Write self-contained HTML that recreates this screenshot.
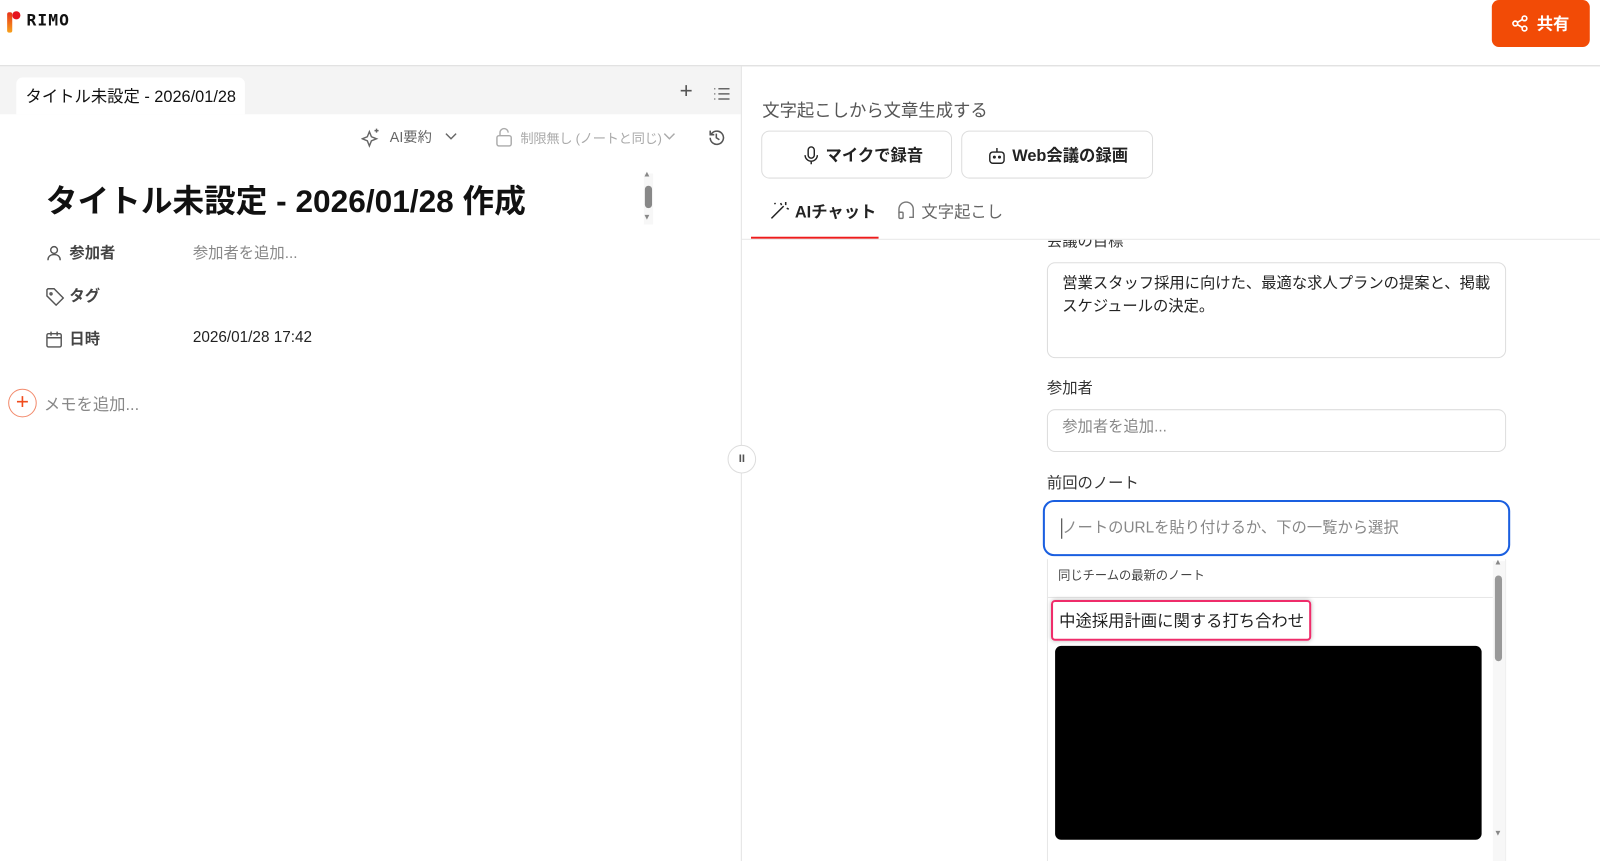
<!DOCTYPE html>
<html><head><meta charset="utf-8"><style>
*{box-sizing:border-box;margin:0;padding:0}
body{width:1600px;height:844px;overflow:hidden;background:#fff;font-family:"Liberation Sans","Noto Sans CJK JP",sans-serif;color:#111;position:relative}
#w{position:absolute;left:0;top:0;width:1568px;height:827px;transform:scale(1.0204);transform-origin:0 0}
.a{position:absolute}
.t{white-space:nowrap;margin-top:-2px}
</style></head><body><div id="w">
<!-- header -->
<div class="a" style="left:7px;top:12px;width:5px;height:20px;background:linear-gradient(#e8321a,#f7a21b);border-radius:2px"></div>
<div class="a" style="left:12px;top:11px;width:8px;height:8px;background:#e5141f;border-radius:50%"></div>
<div class="a t" style="left:26px;top:12px;font-size:16px;font-weight:bold;letter-spacing:1px;font-family:'DejaVu Sans Mono',monospace">RIMO</div>
<div class="a" style="left:1462px;top:0;width:96px;height:46px;background:#f24b06;border-radius:7px;color:#fff;font-weight:bold;font-size:16px">
<svg class="a" style="left:19px;top:14px" width="18" height="18" viewBox="0 0 18 18" fill="none" stroke="#fff" stroke-width="1.6"><circle cx="13" cy="4" r="2.3"/><circle cx="4" cy="9" r="2.3"/><circle cx="13" cy="14" r="2.3"/><path d="M6 8 11 5M6 10 11 13"/></svg>
<span class="a t" style="left:44px;top:12px">共有</span></div>
<div class="a" style="left:0;top:64px;width:1600px;height:1px;background:#d6d6d6"></div>
<!-- left tab bar -->
<div class="a" style="left:0;top:65px;width:726px;height:47px;background:#f4f4f4"></div>
<div class="a" style="left:16px;top:76px;width:224px;height:36px;background:#fff;border-radius:6px 6px 0 0"></div>
<div class="a t" style="left:25px;top:83px;font-size:16px;width:206px;overflow:hidden">タイトル未設定 - 2026/01/28 作成</div>
<div class="a t" style="left:666px;top:78px;font-size:22px;color:#555;font-weight:300">+</div>
<svg class="a" style="left:699px;top:85px" width="16" height="14" stroke="#666" stroke-width="1.4"><path d="M5 2h11M5 7h11M5 12h11M1 2h1M1 7h1M1 12h1"/></svg>
<!-- toolbar -->
<svg class="a" style="left:354px;top:125px" width="20" height="20" fill="none" stroke="#666" stroke-width="1.4"><path d="M8 4l2 5 5 2-5 2-2 5-2-5-5-2 5-2z"/><path d="M15 1v4M13 3h4"/></svg>
<div class="a t" style="left:382px;top:126px;font-size:14px;color:#666">AI要約</div>
<svg class="a" style="left:436px;top:130px" width="12" height="8" fill="none" stroke="#666" stroke-width="1.4"><path d="M1 1l5 5 5-5"/></svg>
<svg class="a" style="left:486px;top:125px" width="16" height="19" fill="none" stroke="#aaa" stroke-width="1.4"><rect x="1" y="8" width="14" height="10" rx="2"/><path d="M4 8V5a4 4 0 0 1 8 0"/></svg>
<div class="a t" style="left:510px;top:127px;font-size:13px;color:#aaa;letter-spacing:-0.3px">制限無し (ノートと同じ)</div>
<svg class="a" style="left:650px;top:130px" width="12" height="8" fill="none" stroke="#aaa" stroke-width="1.4"><path d="M1 1l5 5 5-5"/></svg>
<svg class="a" style="left:693px;top:126px" width="18" height="18" fill="none" stroke="#555" stroke-width="1.5"><path d="M3 9a6.5 6.5 0 1 0 2-4.7L3 6M3 2v4h4M9 5v4l3 2"/></svg>
<!-- title -->
<div class="a t" style="left:45px;top:174px;font-size:31px;font-weight:bold">タイトル未設定 - 2026/01/28 作成</div>
<div class="a" style="left:631px;top:170px;width:9px;height:50px;background:#f7f7f7"></div>
<div class="a" style="left:632px;top:182px;width:7px;height:22px;background:#888;border-radius:4px"></div>
<div class="a t" style="left:630px;top:168px;font-size:8px;color:#888">▲</div>
<div class="a t" style="left:630px;top:210px;font-size:8px;color:#888">▼</div>
<!-- props -->
<svg class="a" style="left:46px;top:240px" width="14" height="16" fill="none" stroke="#555" stroke-width="1.4"><circle cx="7" cy="5" r="3.3"/><path d="M1 15c0-4 3-5.5 6-5.5s6 1.5 6 5.5"/></svg>
<div class="a t" style="left:68px;top:239px;font-size:15px;font-weight:bold;color:#444">参加者</div>
<div class="a t" style="left:189px;top:239px;font-size:15px;color:#888">参加者を追加...</div>
<svg class="a" style="left:45px;top:282px" width="18" height="18" fill="none" stroke="#555" stroke-width="1.4"><path d="M1 2v6l9 9 7-7-9-9H2z"/><circle cx="5" cy="6" r="1"/></svg>
<div class="a t" style="left:68px;top:281px;font-size:15px;font-weight:bold;color:#444">タグ</div>
<svg class="a" style="left:45px;top:324px" width="16" height="17" fill="none" stroke="#555" stroke-width="1.4"><rect x="1" y="3" width="14" height="13" rx="1.5"/><path d="M1 7h14M5 1v4M11 1v4"/></svg>
<div class="a t" style="left:68px;top:323px;font-size:15px;font-weight:bold;color:#444">日時</div>
<div class="a t" style="left:189px;top:324px;font-size:15px;color:#222">2026/01/28 17:42</div>
<div class="a" style="left:8px;top:381px;width:28px;height:28px;border:1.5px solid #f28a6c;border-radius:50%;color:#f04b1c;font-size:22px;line-height:24px;text-align:center">+</div>
<div class="a t" style="left:43px;top:385px;font-size:16px;color:#888">メモを追加...</div>
<!-- divider -->
<div class="a" style="left:726px;top:65px;width:1px;height:779px;background:#e2e2e2"></div>
<div class="a" style="left:713px;top:436px;width:28px;height:28px;border:1px solid #ddd;border-radius:50%;background:#fff;font-size:11px;color:#555;text-align:center;line-height:26px;font-weight:bold">II</div>
<!-- right -->
<div class="a t" style="left:747px;top:96px;font-size:17px;color:#555">文字起こしから文章生成する</div>
<div class="a" style="left:746px;top:128px;width:187px;height:47px;border:1px solid #ddd;border-radius:8px"></div>
<svg class="a" style="left:788px;top:143px" width="14" height="19" fill="none" stroke="#222" stroke-width="1.4"><rect x="4" y="1" width="6" height="11" rx="3"/><path d="M1 9a6 6 0 0 0 12 0M7 15v3"/></svg>
<div class="a t" style="left:809px;top:141px;font-size:16px;font-weight:bold;color:#222">マイクで録音</div>
<div class="a" style="left:942px;top:128px;width:188px;height:47px;border:1px solid #ddd;border-radius:8px"></div>
<svg class="a" style="left:968px;top:143px" width="18" height="18" fill="none" stroke="#222" stroke-width="1.4"><rect x="2" y="6" width="14" height="11" rx="3"/><path d="M9 6V2"/><circle cx="6.5" cy="11" r=".8"/><circle cx="11.5" cy="11" r=".8"/></svg>
<div class="a t" style="left:992px;top:141px;font-size:16px;font-weight:bold;color:#222">Web会議の録画</div>
<svg class="a" style="left:754px;top:196px" width="20" height="20" fill="none" stroke="#222" stroke-width="1.5"><path d="M2 18 14 6M11 3l1 2M17 8l2 1M16 2v3M5 3l1 1"/></svg>
<div class="a t" style="left:779px;top:196px;font-size:16px;font-weight:bold;color:#222">AIチャット</div>
<svg class="a" style="left:879px;top:196px" width="18" height="20" fill="none" stroke="#777" stroke-width="1.4"><path d="M2 13V9a7 7 0 0 1 14 0v8h-4"/><rect x="2" y="12" width="4" height="6" rx="1"/></svg>
<div class="a t" style="left:903px;top:196px;font-size:16px;color:#666">文字起こし</div>
<div class="a" style="left:736px;top:232px;width:125px;height:2px;background:#ee1c1c"></div>
<div class="a" style="left:727px;top:234px;width:841px;height:1px;background:#e8e8e8"></div>
<div class="a" style="left:1026px;top:235px;width:200px;height:12px;overflow:hidden"><div style="white-space:nowrap;font-size:15px;color:#333;margin-top:-10px">会議の目標</div></div>
<div class="a" style="left:1026px;top:257px;width:450px;height:94px;border:1px solid #ddd;border-radius:8px"></div>
<div class="a" style="left:1041px;top:266px;width:425px;font-size:15px;line-height:23px;color:#222">営業スタッフ採用に向けた、最適な求人プランの提案と、掲載スケジュールの決定。</div>
<div class="a t" style="left:1026px;top:371px;font-size:15px;color:#333">参加者</div>
<div class="a" style="left:1026px;top:401px;width:450px;height:42px;border:1px solid #ddd;border-radius:8px"></div>
<div class="a t" style="left:1041px;top:409px;font-size:15px;color:#888">参加者を追加...</div>
<div class="a t" style="left:1026px;top:464px;font-size:15px;color:#333">前回のノート</div>
<div class="a" style="left:1022px;top:490px;width:458px;height:55px;border:2px solid #1a5fe0;border-radius:11px"></div>
<div class="a" style="left:1040px;top:508px;width:1px;height:20px;background:#333"></div>
<div class="a t" style="left:1041px;top:508px;font-size:15px;color:#888">ノートのURLを貼り付けるか、下の一覧から選択</div>
<div class="a" style="left:1026px;top:548px;width:450px;height:296px;border-left:1px solid #e6e6e6;border-right:1px solid #eee"></div>
<div class="a t" style="left:1037px;top:557px;font-size:12px;color:#444">同じチームの最新のノート</div>
<div class="a" style="left:1027px;top:585px;width:436px;height:1px;background:#e6e6e6"></div>
<div class="a" style="left:1030px;top:588px;width:255px;height:40px;border:2.5px solid #ef2c6a;border-radius:4px;box-shadow:0 0 4px rgba(0,0,0,.25)"></div>
<div class="a t" style="left:1038px;top:597px;font-size:16px;color:#222">中途採用計画に関する打ち合わせ</div>
<div class="a" style="left:1034px;top:633px;width:418px;height:190px;background:#000;border-radius:6px"></div>
<div class="a" style="left:1463px;top:550px;width:12px;height:294px;background:#f7f7f7"></div>
<div class="a" style="left:1465px;top:564px;width:7px;height:84px;background:#999;border-radius:4px"></div>
<div class="a t" style="left:1464px;top:548px;font-size:8px;color:#888">▲</div>
<div class="a t" style="left:1464px;top:814px;font-size:8px;color:#888">▼</div>
</div></body></html>
